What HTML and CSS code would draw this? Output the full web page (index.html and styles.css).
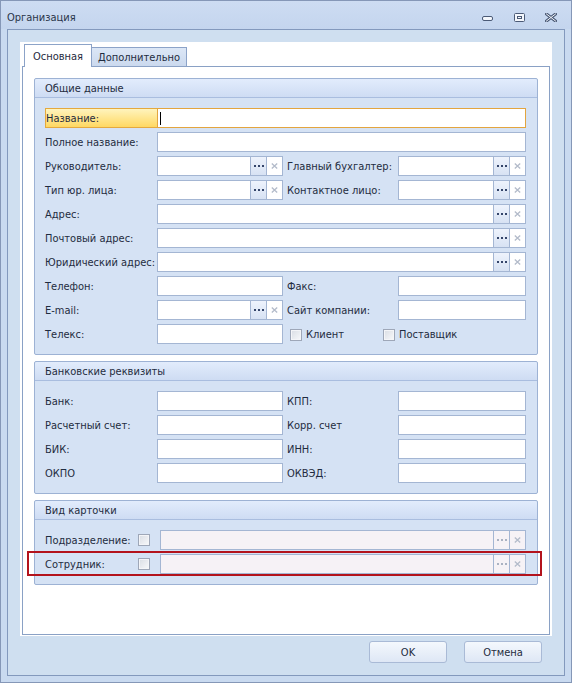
FILE: index.html
```html
<!DOCTYPE html>
<html lang="ru">
<head>
<meta charset="utf-8">
<title>Организация</title>
<link rel="stylesheet" href="styles.css">
</head>
<body>
<div class="window">
  <div class="titlebar">
    <span class="title">Организация</span>
    <div class="wbtns">
      <svg class="wb wb-min" width="12" height="9" viewBox="0 0 12 9"><rect x="0.5" y="3.5" width="10" height="4" rx="1.5" fill="#f4f7fc" stroke="#4b5a76"/></svg>
      <svg class="wb wb-max" width="12" height="9" viewBox="0 0 12 9"><rect x="0.5" y="0.5" width="10" height="8" rx="1" fill="#f4f7fc" stroke="#4b5a76"/><rect x="3.5" y="3.5" width="4" height="2" fill="none" stroke="#4b5a76"/></svg>
      <svg class="wb wb-close" width="12" height="9" viewBox="0 0 12 9"><path d="M1.5 1 L10.5 8 M10.5 1 L1.5 8" stroke="#4b5a76" stroke-width="3" stroke-linecap="square"/><path d="M1.5 1 L10.5 8 M10.5 1 L1.5 8" stroke="#f4f7fc" stroke-width="1" stroke-linecap="square"/></svg>
    </div>
  </div>
  <div class="frame">
    <div class="tabctl">
      <div class="tabs">
        <div class="tab active">Основная</div>
        <div class="tab">Дополнительно</div>
      </div>
      <div class="page">
        <div class="group">
          <div class="ghead">Общие данные</div>
          <div class="gbody">
            <div class="lbl focus">Название:</div>
            <div class="inp focus span3"><span class="caret"></span></div>

            <div class="lbl">Полное название:</div>
            <div class="inp span3"></div>

            <div class="lbl">Руководитель:</div>
            <div class="inp lookup"><span class="txt"></span><span class="b dots"><svg width="10" height="2" viewBox="0 0 10 2"><rect x="0" width="2" height="2"/><rect x="4" width="2" height="2"/><rect x="8" width="2" height="2"/></svg></span><span class="b clr"><svg width="7" height="6" viewBox="0 0 7 6"><path d="M0.8 0.5 L6.2 5.5 M6.2 0.5 L0.8 5.5"/></svg></span></div>
            <div class="lbl r">Главный бухгалтер:</div>
            <div class="inp lookup"><span class="txt"></span><span class="b dots"><svg width="10" height="2" viewBox="0 0 10 2"><rect x="0" width="2" height="2"/><rect x="4" width="2" height="2"/><rect x="8" width="2" height="2"/></svg></span><span class="b clr"><svg width="7" height="6" viewBox="0 0 7 6"><path d="M0.8 0.5 L6.2 5.5 M6.2 0.5 L0.8 5.5"/></svg></span></div>

            <div class="lbl">Тип юр. лица:</div>
            <div class="inp lookup"><span class="txt"></span><span class="b dots"><svg width="10" height="2" viewBox="0 0 10 2"><rect x="0" width="2" height="2"/><rect x="4" width="2" height="2"/><rect x="8" width="2" height="2"/></svg></span><span class="b clr"><svg width="7" height="6" viewBox="0 0 7 6"><path d="M0.8 0.5 L6.2 5.5 M6.2 0.5 L0.8 5.5"/></svg></span></div>
            <div class="lbl r">Контактное лицо:</div>
            <div class="inp lookup"><span class="txt"></span><span class="b dots"><svg width="10" height="2" viewBox="0 0 10 2"><rect x="0" width="2" height="2"/><rect x="4" width="2" height="2"/><rect x="8" width="2" height="2"/></svg></span><span class="b clr"><svg width="7" height="6" viewBox="0 0 7 6"><path d="M0.8 0.5 L6.2 5.5 M6.2 0.5 L0.8 5.5"/></svg></span></div>

            <div class="lbl">Адрес:</div>
            <div class="inp lookup span3"><span class="txt"></span><span class="b dots"><svg width="10" height="2" viewBox="0 0 10 2"><rect x="0" width="2" height="2"/><rect x="4" width="2" height="2"/><rect x="8" width="2" height="2"/></svg></span><span class="b clr"><svg width="7" height="6" viewBox="0 0 7 6"><path d="M0.8 0.5 L6.2 5.5 M6.2 0.5 L0.8 5.5"/></svg></span></div>

            <div class="lbl">Почтовый адрес:</div>
            <div class="inp lookup span3"><span class="txt"></span><span class="b dots"><svg width="10" height="2" viewBox="0 0 10 2"><rect x="0" width="2" height="2"/><rect x="4" width="2" height="2"/><rect x="8" width="2" height="2"/></svg></span><span class="b clr"><svg width="7" height="6" viewBox="0 0 7 6"><path d="M0.8 0.5 L6.2 5.5 M6.2 0.5 L0.8 5.5"/></svg></span></div>

            <div class="lbl">Юридический адрес:</div>
            <div class="inp lookup span3"><span class="txt"></span><span class="b dots"><svg width="10" height="2" viewBox="0 0 10 2"><rect x="0" width="2" height="2"/><rect x="4" width="2" height="2"/><rect x="8" width="2" height="2"/></svg></span><span class="b clr"><svg width="7" height="6" viewBox="0 0 7 6"><path d="M0.8 0.5 L6.2 5.5 M6.2 0.5 L0.8 5.5"/></svg></span></div>

            <div class="lbl">Телефон:</div>
            <div class="inp"></div>
            <div class="lbl r">Факс:</div>
            <div class="inp"></div>

            <div class="lbl">E-mail:</div>
            <div class="inp lookup"><span class="txt"></span><span class="b dots"><svg width="10" height="2" viewBox="0 0 10 2"><rect x="0" width="2" height="2"/><rect x="4" width="2" height="2"/><rect x="8" width="2" height="2"/></svg></span><span class="b clr"><svg width="7" height="6" viewBox="0 0 7 6"><path d="M0.8 0.5 L6.2 5.5 M6.2 0.5 L0.8 5.5"/></svg></span></div>
            <div class="lbl r">Сайт компании:</div>
            <div class="inp"></div>

            <div class="lbl">Телекс:</div>
            <div class="inp"></div>
            <div class="checks">
              <label class="chk"><span class="box"></span>Клиент</label>
              <label class="chk"><span class="box"></span>Поставщик</label>
            </div>
          </div>
        </div>

        <div class="group">
          <div class="ghead">Банковские реквизиты</div>
          <div class="gbody">
            <div class="lbl">Банк:</div>
            <div class="inp"></div>
            <div class="lbl r">КПП:</div>
            <div class="inp"></div>

            <div class="lbl">Расчетный счет:</div>
            <div class="inp"></div>
            <div class="lbl r">Корр. счет</div>
            <div class="inp"></div>

            <div class="lbl">БИК:</div>
            <div class="inp"></div>
            <div class="lbl r">ИНН:</div>
            <div class="inp"></div>

            <div class="lbl">ОКПО</div>
            <div class="inp"></div>
            <div class="lbl r">ОКВЭД:</div>
            <div class="inp"></div>
          </div>
        </div>

        <div class="group">
          <div class="ghead">Вид карточки</div>
          <div class="gbody3">
            <div class="row3">
              <div class="lbl">Подразделение:</div>
              <span class="box"></span>
              <div class="inp lookup dis"><span class="txt"></span><span class="b dots"><svg width="10" height="2" viewBox="0 0 10 2"><rect x="0" width="2" height="2"/><rect x="4" width="2" height="2"/><rect x="8" width="2" height="2"/></svg></span><span class="b clr"><svg width="7" height="6" viewBox="0 0 7 6"><path d="M0.8 0.5 L6.2 5.5 M6.2 0.5 L0.8 5.5"/></svg></span></div>
            </div>
            <div class="row3 hl">
              <div class="lbl">Сотрудник:</div>
              <span class="box"></span>
              <div class="inp lookup dis"><span class="txt"></span><span class="b dots"><svg width="10" height="2" viewBox="0 0 10 2"><rect x="0" width="2" height="2"/><rect x="4" width="2" height="2"/><rect x="8" width="2" height="2"/></svg></span><span class="b clr"><svg width="7" height="6" viewBox="0 0 7 6"><path d="M0.8 0.5 L6.2 5.5 M6.2 0.5 L0.8 5.5"/></svg></span></div>
            </div>
          </div>
        </div>
      </div>
    </div>
    <div class="footer">
      <button class="btn" type="button">OK</button>
      <button class="btn" type="button">Отмена</button>
    </div>
  </div>
</div>
</body>
</html>
```

FILE: styles.css
```css
* { box-sizing: border-box; }
html, body { margin: 0; padding: 0; }
body {
  width: 572px;
  height: 683px;
  font-family: "DejaVu Sans", "Liberation Sans", sans-serif;
  font-stretch: condensed;
  font-size: 11px;
  color: #1f2c40;
  background: #cbdcf0;
}
.window {
  width: 572px;
  height: 683px;
  border: 1px solid #8597b7;
  background: #c9daf0;
  display: flex;
  flex-direction: column;
}
.titlebar {
  height: 28px;
  flex: none;
  display: flex;
  align-items: flex-start;
  padding: 10px 14px 0 6px;
  background: linear-gradient(#cddcf2, #c4d5ee);
}
.title { line-height: 14px; color: #2a3548; }
.wbtns { margin-left: auto; display: flex; margin-top: 2px; }
.wb { display: block; }
.wb-max { margin-left: 20px; }
.wb-close { margin-left: 19px; }

.frame {
  flex: 1;
  margin: 0 6px 6px 6px;
  border: 1px solid #8399bd;
  background: #cfdff0;
  display: flex;
  flex-direction: column;
}
.tabctl {
  margin: 12px 12px 0 12px;
  height: 594px;
  background: #fff;
  padding: 2px 2px 1px 2px;
  display: flex;
  flex-direction: column;
}
.tabs {
  display: flex;
  align-items: flex-end;
  height: 22px;
  padding-left: 2px;
  flex: none;
}
.tab {
  border: 1px solid #8ca3c8;
  border-bottom: none;
  text-align: center;
  color: #1f2c40;
}
.tab.active {
  width: 68px;
  height: 23px;
  line-height: 23px;
  margin-bottom: -1px;
  background: #fff;
  position: relative;
  z-index: 1;
}
.tab:not(.active) {
  width: 96px;
  height: 19px;
  line-height: 20px;
  margin-left: -1px;
  background: linear-gradient(#dce7f6, #cbd9ee);
}
.page {
  flex: 1;
  border: 1px solid #8aa1c5;
  padding: 11px;
  display: flex;
  flex-direction: column;
  gap: 6px;
}
.group {
  border: 1px solid #9db2d4;
  border-radius: 2px;
  background: #d5e2f4;
}
.ghead {
  height: 19px;
  border-bottom: 1px solid #a9bddf;
  background: linear-gradient(#e2ecfc, #cedcf3);
  padding: 1px 0 0 10px;
  line-height: 18px;
  border-radius: 2px 2px 0 0;
}
.gbody {
  padding: 10px 11px 10px 10px;
  display: grid;
  grid-template-columns: 112px 126px 115px 128px;
  grid-auto-rows: 20px;
  row-gap: 4px;
}
.gbody3 {
  padding: 10px 11px 10px 10px;
  display: flex;
  flex-direction: column;
  gap: 4px;
}
.row3 {
  display: grid;
  grid-template-columns: 93px 22px 366px;
  height: 20px;
  align-items: center;
  position: relative;
}
.row3.hl::after {
  content: "";
  position: absolute;
  left: -18px;
  right: -16px;
  top: -3px;
  bottom: -2px;
  border: 2px solid #b3131c;
}
.lbl {
  padding-top: 2px;
  line-height: 18px;
  white-space: nowrap;
}
.lbl.r { padding-left: 4px; }
.lbl.focus {
  background: linear-gradient(#fff4bd, #ffd862);
  border: 1px solid #e4a93e;
  border-right: none;
  padding-top: 1px;
  line-height: 17px;
}
.inp {
  height: 20px;
  border: 1px solid #a4b6d3;
  background: #fff;
}
.inp.focus {
  border-color: #e3a53f;
  display: flex;
  align-items: center;
}
.caret {
  display: block;
  width: 1px;
  height: 13px;
  background: #000;
  margin-left: 2px;
}
.span3 { grid-column: 2 / 5; }
.lookup { display: flex; }
.lookup .txt { flex: 1; }
.lookup .b {
  flex: none;
  width: 16px;
  border-left: 1px solid #a4b6d3;
  display: flex;
  align-items: center;
  justify-content: center;
}
.lookup .b svg { display: block; }
.b.dots { background: linear-gradient(#eef3fc, #d7e2f3); fill: #34456a; }
.b.clr { background: #fff; }
.b.clr svg path { stroke: #b3bbca; stroke-width: 1.3; fill: none; }
.lookup.dis { background: #f6f2f6; }
.lookup.dis .b.dots { background: #f6f2f6; fill: #aab2c2; }
.lookup.dis .b.clr { background: #f6f2f6; }

.checks {
  grid-column: 3 / 5;
  display: flex;
  align-items: center;
  padding: 1px 0 0 7px;
}
.chk {
  display: flex;
  align-items: center;
  gap: 4px;
}
.chk:first-child { width: 93px; }
.box {
  display: block;
  width: 12px;
  height: 12px;
  border: 1px solid #9ea7b8;
  background: linear-gradient(135deg, #d9dde4, #f8f9fb);
  box-shadow: inset 0 0 0 1px #f4f5f8;
}

.footer {
  display: flex;
  justify-content: flex-end;
  gap: 17px;
  padding: 5px 22px 0 0;
}
.btn {
  width: 78px;
  height: 22px;
  border: 1px solid #a9bad6;
  border-radius: 3px;
  background: linear-gradient(#f4f8fd, #dee7f5);
  font: inherit;
  color: #1f2c40;
  padding: 1px 0 0 0;
}
```
